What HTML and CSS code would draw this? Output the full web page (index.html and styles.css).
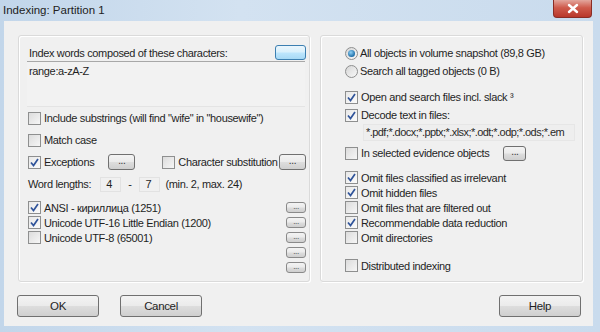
FILE: index.html
```html
<!DOCTYPE html>
<html lang="en">

<head>
    <meta charset="UTF-8">
    <title>Indexing: Partition 1</title>
    <link rel="stylesheet" href="styles.css">
</head>

<body>
    <div class="window">
        <div class="titlebar">
            <span class="title">Indexing: Partition 1</span>
            <span class="close">
                <svg width="14" height="11" viewBox="0 0 14 11"><path d="M3 2 L11 9 M11 2 L3 9" stroke="#fff" stroke-width="2.4" stroke-linecap="round"/></svg>
            </span>
        </div>
        <div class="client">
            <div class="panels">
                <div class="group left">
                    <div class="head">
                        <span>Index words composed of these characters:</span>
                        <span class="btn blue"></span>
                    </div>
                    <div class="charset">range:a-zA-Z</div>
                    <div class="row tall"><span class="cb"></span>Include substrings (will find "wife" in "housewife")</div>
                    <div class="row tall"><span class="cb"></span>Match case</div>
                    <div class="row tall">
                        <span class="cb on"><svg width="11" height="11" viewBox="0 0 11 11"><path d="M2 5.5 L4.5 8.5 L9 2" fill="none" stroke="#30549a" stroke-width="1.7"/></svg></span>Exceptions
                        <span class="btn dots exc">...</span>
                        <span class="cb sub"></span>Character substitution
                        <span class="btn dots chr">...</span>
                    </div>
                    <div class="row tall">
                        Word lengths:
                        <span class="num first">4</span>
                        <span class="dash">-</span>
                        <span class="num">7</span>
                        <span class="hint">(min. 2, max. 24)</span>
                    </div>
                    <div class="codepages">
                        <div class="list">
                            <div class="row"><span class="cb on"><svg width="11" height="11" viewBox="0 0 11 11"><path d="M2 5.5 L4.5 8.5 L9 2" fill="none" stroke="#30549a" stroke-width="1.7"/></svg></span>ANSI - кириллица (1251)</div>
                            <div class="row"><span class="cb on"><svg width="11" height="11" viewBox="0 0 11 11"><path d="M2 5.5 L4.5 8.5 L9 2" fill="none" stroke="#30549a" stroke-width="1.7"/></svg></span>Unicode UTF-16 Little Endian (1200)</div>
                            <div class="row"><span class="cb"></span>Unicode UTF-8 (65001)</div>
                        </div>
                        <div class="minis">
                            <span class="btn mini">...</span>
                            <span class="btn mini">...</span>
                            <span class="btn mini">...</span>
                            <span class="btn mini">...</span>
                            <span class="btn mini">...</span>
                        </div>
                    </div>
                </div>
                <div class="group right">
                    <div class="row radio-row"><span class="rb on"></span>All objects in volume snapshot (89,8 GB)</div>
                    <div class="row radio-row"><span class="rb"></span>Search all tagged objects (0 B)</div>
                    <div class="row mid gap-top"><span class="cb on"><svg width="11" height="11" viewBox="0 0 11 11"><path d="M2 5.5 L4.5 8.5 L9 2" fill="none" stroke="#30549a" stroke-width="1.7"/></svg></span>Open and search files incl. slack ³</div>
                    <div class="row mid"><span class="cb on"><svg width="11" height="11" viewBox="0 0 11 11"><path d="M2 5.5 L4.5 8.5 L9 2" fill="none" stroke="#30549a" stroke-width="1.7"/></svg></span>Decode text in files:</div>
                    <div class="filetypes">*.pdf;*.docx;*.pptx;*.xlsx;*.odt;*.odp;*.ods;*.em</div>
                    <div class="row evidence"><span class="cb"></span>In selected evidence objects<span class="btn dots ev">...</span></div>
                    <div class="omit">
                        <div class="row"><span class="cb on"><svg width="11" height="11" viewBox="0 0 11 11"><path d="M2 5.5 L4.5 8.5 L9 2" fill="none" stroke="#30549a" stroke-width="1.7"/></svg></span>Omit files classified as irrelevant</div>
                        <div class="row"><span class="cb on"><svg width="11" height="11" viewBox="0 0 11 11"><path d="M2 5.5 L4.5 8.5 L9 2" fill="none" stroke="#30549a" stroke-width="1.7"/></svg></span>Omit hidden files</div>
                        <div class="row"><span class="cb"></span>Omit files that are filtered out</div>
                        <div class="row"><span class="cb on"><svg width="11" height="11" viewBox="0 0 11 11"><path d="M2 5.5 L4.5 8.5 L9 2" fill="none" stroke="#30549a" stroke-width="1.7"/></svg></span>Recommendable data reduction</div>
                        <div class="row"><span class="cb"></span>Omit directories</div>
                    </div>
                    <div class="row distributed"><span class="cb"></span>Distributed indexing</div>
                </div>
            </div>
            <div class="actions">
                <span class="btn big">OK</span>
                <span class="btn big">Cancel</span>
                <span class="spacer"></span>
                <span class="btn big">Help</span>
            </div>
        </div>
    </div>
</body>
</html>
```

FILE: styles.css
```css
body {
    margin: 0;
    font-family: "Liberation Sans", Arial, sans-serif;
    font-size: 11px;
    letter-spacing: -0.35px;
    color: #1f1f1f;
}

.window {
    width: 600px;
    height: 332px;
    box-sizing: border-box;
    background: linear-gradient(90deg, #c2d6ea, #d3e2f1 40%, #c9dbed);
    display: flex;
    flex-direction: column;
}

.titlebar {
    height: 21px;
    display: flex;
    align-items: flex-start;
    justify-content: space-between;
    padding-left: 3px;
}

.title {
    font-size: 11.5px;
    letter-spacing: 0;
    line-height: 21px;
    color: #222;
}

.close {
    width: 39px;
    height: 18px;
    margin-right: 8px;
    box-sizing: border-box;
    border: 1px solid #8a2c24;
    border-top: none;
    border-radius: 0 0 4px 4px;
    background: linear-gradient(#e3a69d, #cf5b4c 45%, #b8372a);
    display: flex;
    align-items: center;
    justify-content: center;
}

.client {
    flex: 1;
    margin: 0 7px 6px 4px;
    background: #f0f0f0;
    padding: 14px 10px 0 14px;
    display: flex;
    flex-direction: column;
}

.panels {
    display: flex;
    gap: 10px;
    height: 247px;
}

.group {
    box-sizing: border-box;
    border: 1px solid #dadada;
    border-radius: 3px;
    box-shadow: inset 1px 1px 0 #fff, 1px 1px 0 #fff;
}

.left {
    width: 292px;
    padding: 8px 3px 0 9px;
}

.right {
    width: 263px;
    padding: 8px 0 0 24px;
}

.row {
    display: flex;
    align-items: center;
    height: 15px;
    white-space: nowrap;
}

.row.tall {
    height: 22px;
}

.row.radio-row,
.row.mid {
    height: 18px;
}

.gap-top {
    margin-top: 8px;
}

.cb {
    width: 13px;
    height: 13px;
    box-sizing: border-box;
    border: 1px solid #8e8f8f;
    background: linear-gradient(135deg, #dcdcdc, #f6f6f6);
    margin-right: 3px;
    display: inline-flex;
    align-items: center;
    justify-content: center;
    flex-shrink: 0;
}

.cb.on {
    background: linear-gradient(135deg, #e8e8e8, #fbfbfb);
}

.rb {
    width: 13px;
    height: 13px;
    box-sizing: border-box;
    border: 1px solid #8e8f8f;
    border-radius: 50%;
    background: linear-gradient(135deg, #d6d6d6, #f8f8f8);
    margin-right: 2px;
    flex-shrink: 0;
    display: inline-flex;
    align-items: center;
    justify-content: center;
}

.rb.on::after {
    content: "";
    width: 7px;
    height: 7px;
    border-radius: 50%;
    background: radial-gradient(circle at 40% 35%, #8fd0f5, #1f6fa8 70%);
}

.btn {
    box-sizing: border-box;
    border: 1px solid #707070;
    border-radius: 3px;
    background: linear-gradient(#f3f3f3, #ebebeb 48%, #dddddd 52%, #cfcfcf);
    display: inline-flex;
    align-items: center;
    justify-content: center;
    color: #333;
    flex-shrink: 0;
}

.head {
    display: flex;
    align-items: center;
    justify-content: space-between;
    height: 17px;
    padding-left: 1px;
}

.btn.blue {
    width: 31px;
    height: 15px;
    border-color: #3c7fb1;
    background: linear-gradient(#eaf6fd, #d9f0fc 48%, #bee6fd 52%, #a7d9f5);
}

.charset {
    height: 46px;
    margin: 0 1px 0 -1px;
    box-sizing: border-box;
    border-top: 1px solid #a8a8a8;
    border-bottom: 1px solid #e4e4e4;
    background: #f2f2f2;
    padding: 3px 2px;
}

.btn.dots {
    width: 27px;
    height: 16px;
    font-size: 10px;
    line-height: 1;
    padding-bottom: 3px;
}

.exc {
    margin-left: 14px;
}

.cb.sub {
    margin-left: 27px;
}

.chr {
    margin-left: auto;
}

.num {
    width: 21px;
    height: 15px;
    box-sizing: border-box;
    border: 1px solid #e2e2e2;
    padding-left: 5px;
    line-height: 13px;
}

.num.first {
    margin-left: 9px;
}

.dash {
    margin: 0 8px 0 7px;
}

.hint {
    margin-left: 5px;
}

.codepages {
    display: flex;
    justify-content: space-between;
    margin-top: 5px;
}

.minis {
    display: flex;
    flex-direction: column;
    gap: 4px;
    padding-top: 2px;
}

.btn.mini {
    width: 20px;
    height: 11px;
    font-size: 8px;
    line-height: 1;
    padding-bottom: 2px;
    border-color: #8a8a8a;
}

.filetypes {
    width: 212px;
    height: 17px;
    box-sizing: border-box;
    margin: 0 0 4px 18px;
    border: 1px solid #e6e6e6;
    background: #eeeeee;
    padding-left: 2px;
    letter-spacing: -0.55px;
    line-height: 15px;
    color: #2a2a2a;
    white-space: nowrap;
}

.evidence {
    height: 16px;
}

.btn.ev {
    width: 23px;
    height: 15px;
    margin-left: 14px;
}

.omit {
    margin-top: 9px;
}

.distributed {
    margin-top: 13px;
}

.actions {
    display: flex;
    gap: 21px;
    margin: 13px 0 0 -1px;
    padding-right: 2px;
}

.spacer {
    flex: 1;
}

.btn.big {
    width: 82px;
    height: 22px;
    font-size: 11.5px;
    color: #1f1f1f;
}
```
